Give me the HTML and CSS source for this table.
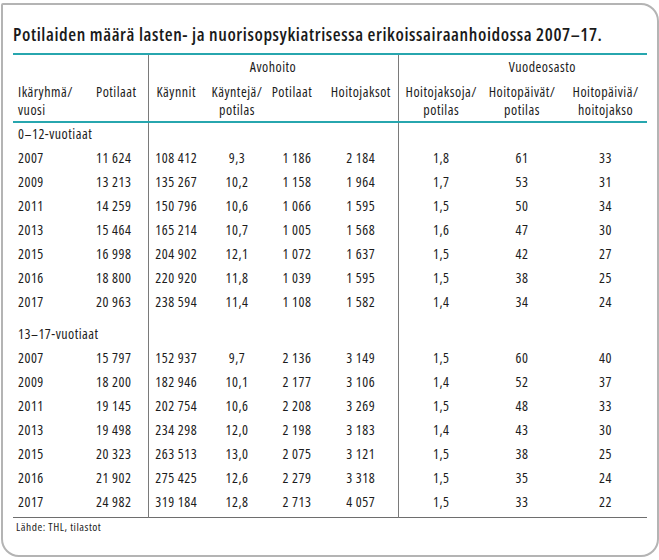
FILE: index.html
```html
<!DOCTYPE html>
<html lang="fi">
<head>
<meta charset="utf-8">
<title>Potilaiden määrä</title>
<link rel="stylesheet" href="styles.css">
</head>
<body>
<div class="frame">
  <h1 class="title">Potilaiden määrä lasten- ja nuorisopsykiatrisessa erikoissairaanhoidossa 2007–17.</h1>
  <table class="data">
    <colgroup>
      <col class="w1"><col class="w2"><col class="w3"><col class="w4"><col class="w5">
      <col class="w6"><col class="w7"><col class="w8"><col class="w9">
    </colgroup>
    <thead>
      <tr class="group">
        <th colspan="2"></th>
        <th colspan="4" class="vl">Avohoito</th>
        <th colspan="3" class="vl vuode">Vuodeosasto</th>
      </tr>
      <tr class="heads">
        <th class="left">Ikäryhmä/<br>vuosi</th>
        <th class="left">Potilaat</th>
        <th class="vl">Käynnit</th>
        <th>Käyntejä/<br>potilas</th>
        <th class="shift">Potilaat</th>
        <th>Hoitojaksot</th>
        <th class="vl">Hoitojaksoja/<br>potilas</th>
        <th>Hoitopäivät/<br>potilas</th>
        <th class="last">Hoitopäiviä/<br>hoitojakso</th>
      </tr>
    </thead>
    <tbody>
      <tr class="sec"><td colspan="2" class="left">0–12-vuotiaat</td><td class="vl"></td><td></td><td></td><td></td><td class="vl"></td><td></td><td></td></tr>
      <tr><td class="left">2007</td><td class="left">11 624</td><td class="vl">108 412</td><td>9,3</td><td>1 186</td><td>2 184</td><td class="vl">1,8</td><td>61</td><td class="last">33</td></tr>
      <tr><td class="left">2009</td><td class="left">13 213</td><td class="vl">135 267</td><td>10,2</td><td>1 158</td><td>1 964</td><td class="vl">1,7</td><td>53</td><td class="last">31</td></tr>
      <tr><td class="left">2011</td><td class="left">14 259</td><td class="vl">150 796</td><td>10,6</td><td>1 066</td><td>1 595</td><td class="vl">1,5</td><td>50</td><td class="last">34</td></tr>
      <tr><td class="left">2013</td><td class="left">15 464</td><td class="vl">165 214</td><td>10,7</td><td>1 005</td><td>1 568</td><td class="vl">1,6</td><td>47</td><td class="last">30</td></tr>
      <tr><td class="left">2015</td><td class="left">16 998</td><td class="vl">204 902</td><td>12,1</td><td>1 072</td><td>1 637</td><td class="vl">1,5</td><td>42</td><td class="last">27</td></tr>
      <tr><td class="left">2016</td><td class="left">18 800</td><td class="vl">220 920</td><td>11,8</td><td>1 039</td><td>1 595</td><td class="vl">1,5</td><td>38</td><td class="last">25</td></tr>
      <tr><td class="left">2017</td><td class="left">20 963</td><td class="vl">238 594</td><td>11,4</td><td>1 108</td><td>1 582</td><td class="vl">1,4</td><td>34</td><td class="last">24</td></tr>
      <tr class="sec sec2"><td colspan="2" class="left">13–17-vuotiaat</td><td class="vl"></td><td></td><td></td><td></td><td class="vl"></td><td></td><td></td></tr>
      <tr><td class="left">2007</td><td class="left">15 797</td><td class="vl">152 937</td><td>9,7</td><td>2 136</td><td>3 149</td><td class="vl">1,5</td><td>60</td><td class="last">40</td></tr>
      <tr><td class="left">2009</td><td class="left">18 200</td><td class="vl">182 946</td><td>10,1</td><td>2 177</td><td>3 106</td><td class="vl">1,4</td><td>52</td><td class="last">37</td></tr>
      <tr><td class="left">2011</td><td class="left">19 145</td><td class="vl">202 754</td><td>10,6</td><td>2 208</td><td>3 269</td><td class="vl">1,5</td><td>48</td><td class="last">33</td></tr>
      <tr><td class="left">2013</td><td class="left">19 498</td><td class="vl">234 298</td><td>12,0</td><td>2 198</td><td>3 183</td><td class="vl">1,4</td><td>43</td><td class="last">30</td></tr>
      <tr><td class="left">2015</td><td class="left">20 323</td><td class="vl">263 513</td><td>13,0</td><td>2 075</td><td>3 121</td><td class="vl">1,5</td><td>38</td><td class="last">25</td></tr>
      <tr><td class="left">2016</td><td class="left">21 902</td><td class="vl">275 425</td><td>12,6</td><td>2 279</td><td>3 318</td><td class="vl">1,5</td><td>35</td><td class="last">24</td></tr>
      <tr class="end"><td class="left">2017</td><td class="left">24 982</td><td class="vl">319 184</td><td>12,8</td><td>2 713</td><td>4 057</td><td class="vl">1,5</td><td>33</td><td class="last">22</td></tr>
    </tbody>
  </table>
  <p class="source">Lähde: THL, tilastot</p>
</div>
</body>
</html>
```
FILE: styles.css
```css
html, body {
  margin: 0;
  padding: 0;
  background: #ffffff;
}

body {
  font-family: "Open Sans", "Roboto", sans-serif;
  font-stretch: 75%;
  color: #1c1c1c;
}

.frame {
  box-sizing: border-box;
  width: 658px;
  height: 554px;
  margin: 3px 0 0 1px;
  border: 2px solid #b4b4b4;
  border-radius: 2px 18px 18px 18px;
  padding: 18px 0 0 10px;
}

.title {
  margin: 0 0 8px 0;
  font-size: 18px;
  line-height: 22px;
  font-weight: 600;
  letter-spacing: 0.6px;
  color: #1a1a1a;
  white-space: nowrap;
}

.data {
  width: 634px;
  table-layout: fixed;
  border-collapse: collapse;
  border-top: 2px solid #27a6ae;
  font-size: 14px;
  letter-spacing: 0.5px;
}

.w1 { width: 78px; }
.w2 { width: 57px; }
.w3 { width: 56px; }
.w4 { width: 66px; }
.w5 { width: 54px; }
.w6 { width: 74px; }
.w7 { width: 86px; }
.w8 { width: 76px; }
.w9 { width: 87px; }

.data th,
.data td {
  padding: 0;
  text-align: center;
  white-space: nowrap;
  font-weight: 400;
}

.data .left {
  text-align: left;
  padding-left: 5px;
}

.data .vl {
  border-left: 1px solid #7a7a7a;
}

.group th {
  height: 24px;
  line-height: 24px;
  vertical-align: top;
}

.group .vuode {
  padding-left: 39px;
}

.heads {
  border-bottom: 2px solid #27a6ae;
}

.heads th {
  vertical-align: top;
  line-height: 18px;
  padding-top: 4px;
  padding-bottom: 2px;
}

.heads .shift {
  padding-right: 10px;
}

.data .last {
  padding-left: 4px;
}

.data tbody td {
  line-height: 22px;
  padding-bottom: 2px;
}

.data tbody .sec2 td {
  padding-top: 8px;
}

.data tbody .end td {
  padding-bottom: 4px;
}

.data tbody .end {
  border-bottom: 1px solid #6e6e6e;
}

.source {
  margin: 2px 0 0 0;
  padding-left: 3px;
  font-size: 11.5px;
  line-height: 14px;
  letter-spacing: 0.5px;
  color: #1c1c1c;
}
```
